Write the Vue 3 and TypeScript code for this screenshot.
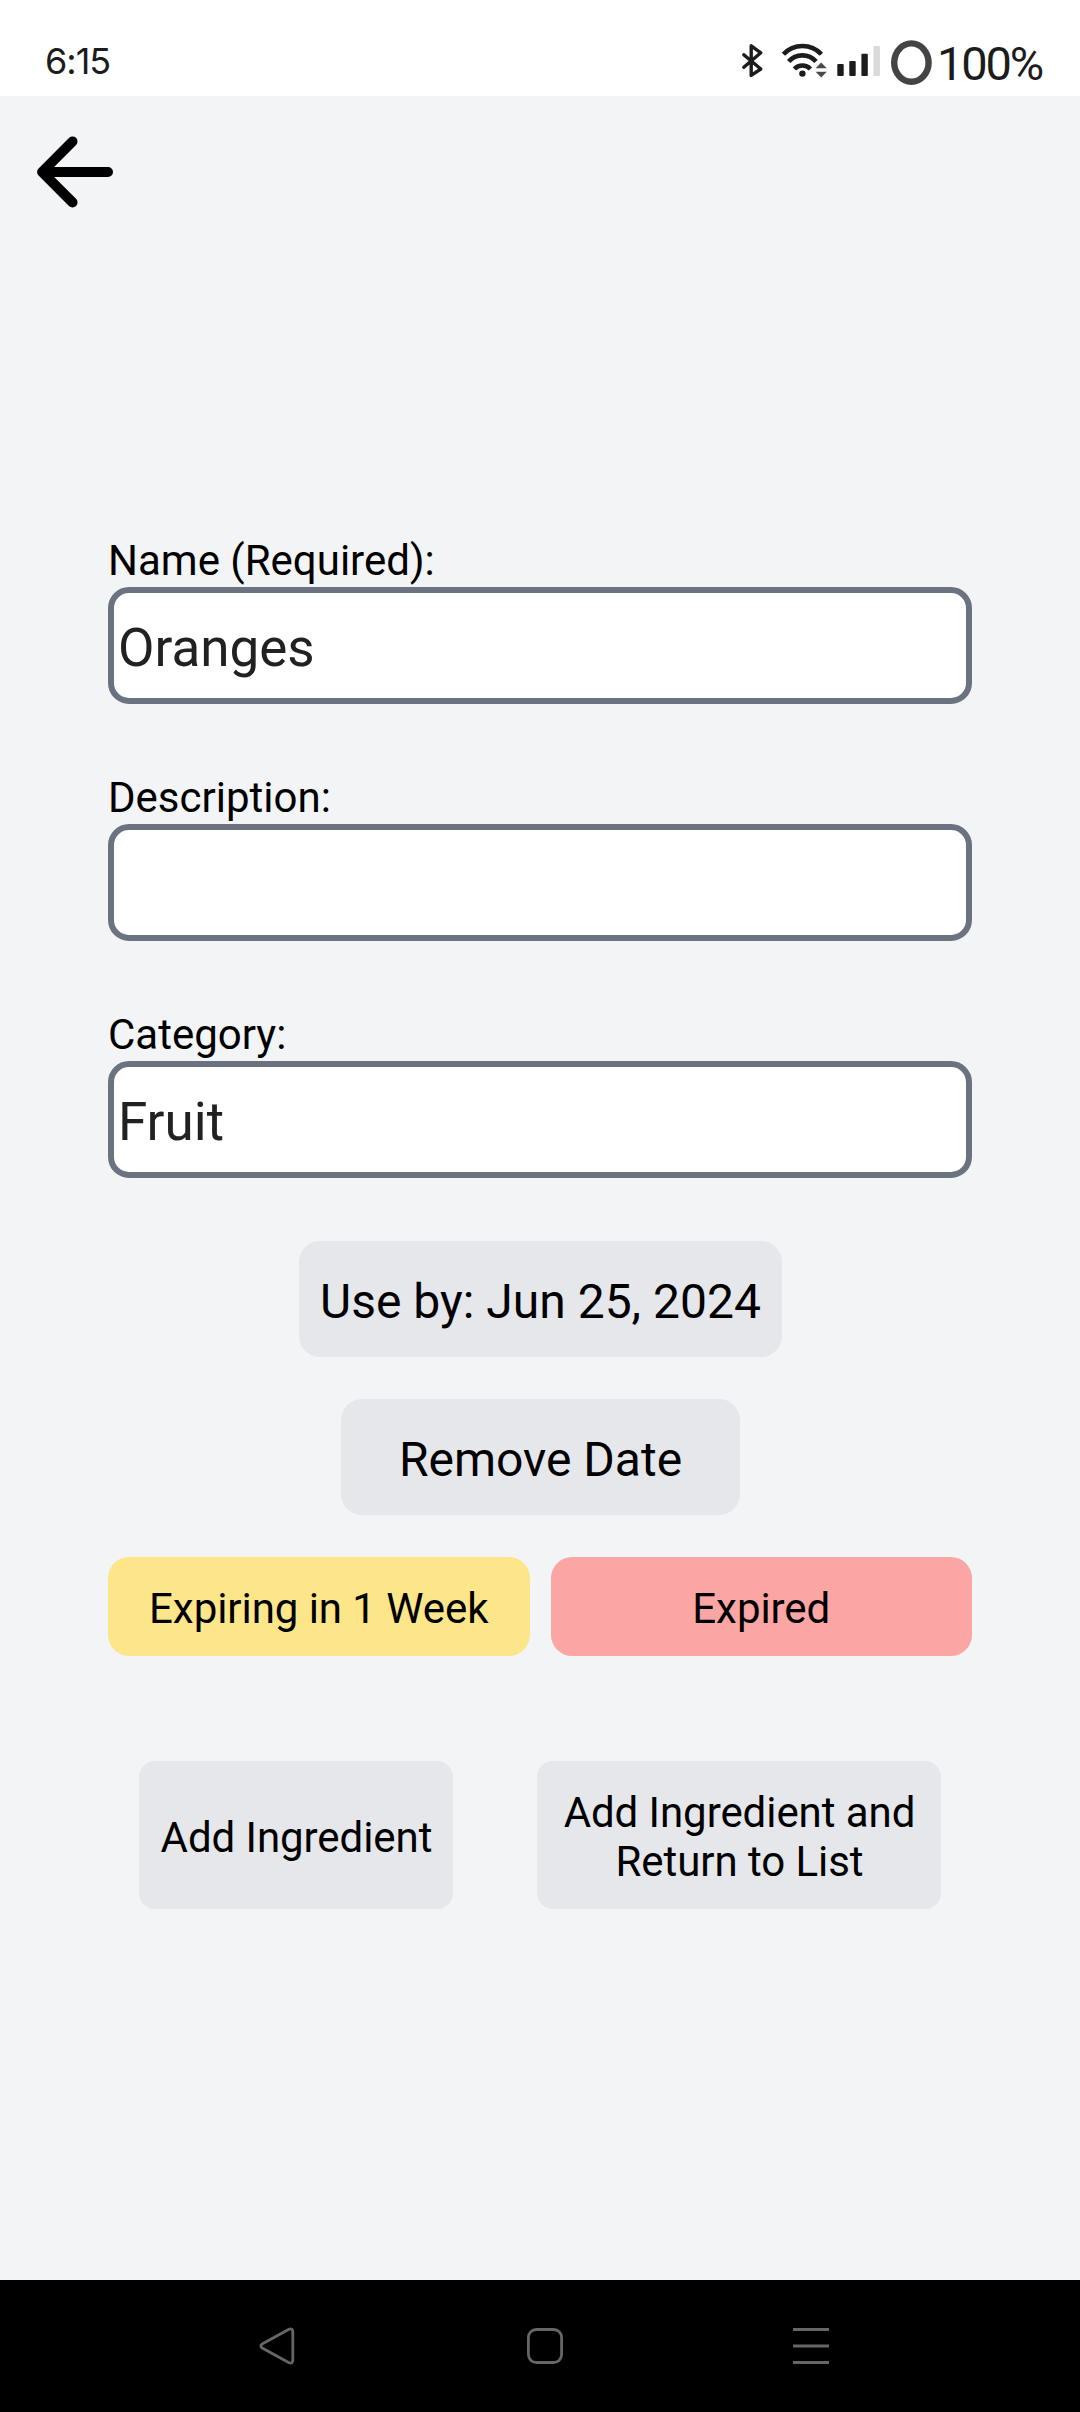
<script setup lang="ts">
interface Field {
  label: string
  value: string
}

const fields: Field[] = [
  { label: 'Name (Required):', value: 'Oranges' },
  { label: 'Description:', value: '' },
  { label: 'Category:', value: 'Fruit' },
]
</script>

<template>
  <div class="screen">
    <header class="status">
      <span class="time">6:15</span>
      <div class="indicators">
        <svg width="40" height="96" viewBox="740 0 40 96" fill="none" stroke="#1c1c1c" stroke-width="3.4" stroke-linejoin="round" stroke-linecap="round">
          <path d="M743.8 54.8 L760.8 69 L751.2 75.4 V45.8 L760.8 52.8 L743.8 67.2" />
        </svg>
        <svg width="50" height="96" viewBox="780 0 50 96" fill="none" stroke="#1c1c1c" stroke-width="4.6">
          <path d="M783.4 54.2 A26 26 0 0 1 821.4 54.2" />
          <path d="M788.7 61.6 A18 18 0 0 1 816 61.6" />
          <path d="M794.4 69 A11 11 0 0 1 810.4 69" />
          <circle cx="802.4" cy="73.6" r="3.2" fill="#1c1c1c" stroke="none" />
          <path d="M821.2 62.5 L826.8 68.2 H815.6 Z M821.2 77.4 L826.8 71.8 H815.6 Z" fill="#4a4a4a" stroke="none" />
        </svg>
        <svg width="55" height="96" viewBox="830 0 55 96" fill="#1c1c1c">
          <rect x="837.3" y="64" width="6.4" height="12" rx="1" />
          <rect x="849.3" y="61" width="6.4" height="15" rx="1" />
          <rect x="861.4" y="53.8" width="6.4" height="22.2" rx="1" />
          <rect x="873.5" y="46" width="6.4" height="30" rx="1" fill="#d9d9d9" />
        </svg>
        <svg width="50" height="96" viewBox="885 0 50 96" fill="none" stroke="#444" stroke-width="6.4">
          <ellipse cx="911.4" cy="62.6" rx="17.2" ry="19.2" />
        </svg>
        <span class="battery">100%</span>
      </div>
    </header>

    <main class="content">
      <button class="back" aria-label="Back">
        <svg width="80" height="76" viewBox="35 134 80 76" fill="none" stroke="#000" stroke-width="10" stroke-linecap="round" stroke-linejoin="round">
          <path d="M72.5 141.4 L42.1 172 L72.5 202.4 M42.1 172 H108" />
        </svg>
      </button>

      <section class="form">
        <div v-for="field in fields" :key="field.label" class="field">
          <span class="label">{{ field.label }}</span>
          <div class="box">{{ field.value }}</div>
        </div>

        <button class="btn date">Use by: Jun 25, 2024</button>
        <button class="btn remove">Remove Date</button>

        <div class="filters">
          <button class="btn expiring">Expiring in 1 Week</button>
          <button class="btn expired">Expired</button>
        </div>

        <div class="actions">
          <button class="btn add">Add Ingredient</button>
          <button class="btn add-return">Add Ingredient and<br />Return to List</button>
        </div>
      </section>
    </main>

    <nav class="navbar">
      <svg width="38" height="38" viewBox="0 0 38 38" class="nav-icon">
        <path d="M31 2.3 L4.2 17 Q1.4 19 4.2 21 L31 35.7 Q34.8 37 34.8 33 V5 Q34.8 1 31 2.3 Z" />
      </svg>
      <svg width="38" height="38" viewBox="0 0 38 38" class="nav-icon">
        <rect x="3.4" y="2.5" width="33.2" height="33" rx="8" />
      </svg>
      <svg width="38" height="38" viewBox="0 0 38 38" class="nav-icon">
        <path d="M1 2.5 H37 M1 19 H37 M1 35.5 H37" />
      </svg>
    </nav>
  </div>
</template>

<style>
body {
  margin: 0;
}
</style>

<style scoped>
.screen {
  display: flex;
  flex-direction: column;
  width: 1080px;
  height: 2412px;
  overflow: hidden;
  background: #f3f4f6;
  color: #000;
  font-family: Roboto, sans-serif;
}

.status {
  display: flex;
  justify-content: space-between;
  height: 96px;
  flex: none;
  background: #fff;
  color: #1c1c1c;
}

.time {
  padding-left: 45px;
  font-family: Inter, sans-serif;
  font-size: 36px;
  line-height: 123px;
  letter-spacing: -1px;
}

.indicators {
  display: flex;
  width: 340px;
}

.indicators svg {
  flex: none;
}

.battery {
  padding-left: 2px;
  font-size: 47px;
  line-height: 127px;
  letter-spacing: -2.2px;
  white-space: nowrap;
}

.content {
  flex: 1;
  display: flex;
  flex-direction: column;
}

button {
  margin: 0;
  padding: 0;
  border: 0;
  background: none;
  color: inherit;
  font-family: inherit;
}

.back {
  display: flex;
  align-self: flex-start;
  margin: 38px 0 0 35px;
}

.form {
  display: flex;
  flex-direction: column;
  align-items: center;
  width: 864px;
  margin: 326px auto 0;
}

.field {
  display: flex;
  flex-direction: column;
  width: 100%;
  margin-bottom: 69px;
}

.field:nth-of-type(3) {
  margin-bottom: 63px;
}

.label {
  height: 51px;
  font-size: 42px;
  line-height: 49px;
}

.box {
  box-sizing: border-box;
  height: 117px;
  padding: 3px 4px 0;
  border: 6px solid #6b7280;
  border-radius: 21px;
  background: #fff;
  color: #212121;
  font-size: 53px;
  line-height: 105px;
}

.btn {
  display: flex;
  align-items: center;
  justify-content: center;
  box-sizing: border-box;
  padding-top: 4px;
  border-radius: 21px;
  background: #e5e7eb;
  font-size: 42px;
  line-height: 49px;
  letter-spacing: -0.06px;
  text-align: center;
  white-space: nowrap;
}

.date,
.remove {
  height: 116px;
  padding-top: 4px;
  padding-left: 1px;
  margin-bottom: 42px;
  font-size: 48px;
  letter-spacing: 0;
}

.date {
  width: 483px;
}

.remove {
  width: 399px;
}

.filters {
  display: flex;
  gap: 21px;
  width: 100%;
}

.filters .btn {
  flex: 1;
  height: 99px;
  padding-top: 3px;
}

.expiring {
  background: #fde68a;
}

.expired {
  background: #fca5a5;
}

.actions {
  display: flex;
  justify-content: center;
  gap: 84px;
  margin-top: 105px;
}

.actions .btn {
  height: 148px;
  padding-left: 1px;
  border-radius: 16px;
}

.add {
  width: 314px;
}

.add-return {
  width: 404px;
}

.navbar {
  display: flex;
  justify-content: space-between;
  box-sizing: border-box;
  height: 132px;
  flex: none;
  padding: 47px 250px 0 258px;
  background: #000;
}

.nav-icon {
  fill: none;
  stroke: #666;
  stroke-width: 2.8;
}
</style>
